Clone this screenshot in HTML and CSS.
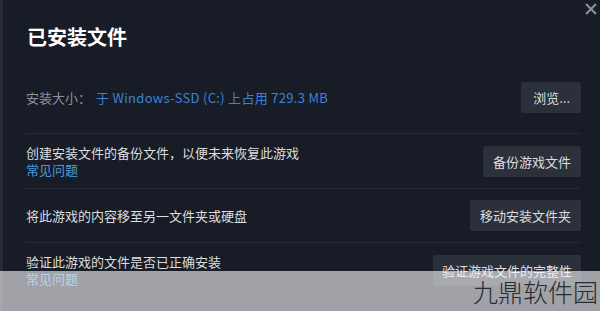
FILE: index.html
```html
<!DOCTYPE html>
<html lang="zh-CN">
<head>
<meta charset="utf-8">
<link rel="stylesheet" href="styles.css">
</head>
<body>
<div class="dialog">
  <div class="edge"></div>
  <div class="content">
    <h1 class="title">已安装文件</h1>
    <div class="row row-first">
      <div class="info">
        <span class="label">安装大小：</span><span class="size">于 Windows-SSD (C:) 上占用 729.3 MB</span>
      </div>
      <button class="btn btn-browse">浏览...</button>
    </div>
    <div class="row">
      <div class="info">
        <div class="desc">创建安装文件的备份文件，以便未来恢复此游戏</div>
        <div class="link">常见问题</div>
      </div>
      <button class="btn">备份游戏文件</button>
    </div>
    <div class="row">
      <div class="info">
        <div class="desc">将此游戏的内容移至另一文件夹或硬盘</div>
      </div>
      <button class="btn">移动安装文件夹</button>
    </div>
    <div class="row row-last">
      <div class="info">
        <div class="desc">验证此游戏的文件是否已正确安装</div>
        <div class="link">常见问题</div>
      </div>
      <button class="btn btn-verify">验证游戏文件的完整性</button>
    </div>
  </div>
  <svg class="close" width="12" height="12" viewBox="0 0 12 12"><path d="M1 1 L11 11 M11 1 L1 11" stroke="#8b929a" stroke-width="2" fill="none"/></svg>
  <div class="watermark"><span class="wm-text">九鼎软件园</span></div>
</div>
</body>
</html>
```
FILE: styles.css
```css
* { box-sizing: border-box; }
html, body { margin: 0; padding: 0; }
body {
  width: 600px;
  height: 311px;
  overflow: hidden;
  background: #181c26;
  font-family: "Noto Sans CJK SC", "Noto Sans", sans-serif;
  color: #dcdedf;
}
.dialog {
  position: relative;
  display: flex;
  width: 600px;
  height: 311px;
}
.edge {
  width: 3px;
  flex: none;
  background: #272b33;
}
.content {
  flex: 1;
  padding: 0 19px 0 23px;
}
.title {
  margin: 24px 0 0 1px;
  font-size: 20px;
  line-height: 26px;
  font-weight: 700;
  color: #ffffff;
}
.row {
  display: flex;
  align-items: center;
  justify-content: space-between;
  padding: 10px 0;
  border-bottom: 1px solid #262b35;
  min-height: 54px;
}
.row-first {
  padding: 32px 0 20px;
}
.row-last { border-bottom: none; }
.info {
  font-size: 13px;
  line-height: 17px;
}
.label { color: #8b929a; }
.size { color: #3a84d8; margin-left: 5px; letter-spacing: 0.3px; }
.desc { color: #dcdedf; }
.link { color: #4a9fdc; }
.btn {
  height: 31px;
  padding: 0 10px;
  border: none;
  border-radius: 2px;
  background: #2b303b;
  color: #dcdedf;
  font-family: "Noto Sans CJK SC", "Noto Sans", sans-serif;
  font-size: 13px;
}
.btn-browse { padding: 0 11px 0 12px; }
.btn-verify { padding: 0 9px; }
.close {
  position: absolute;
  top: 3px;
  left: 585px;
}
.watermark {
  position: absolute;
  left: 0;
  top: 271px;
  width: 600px;
  height: 40px;
  background: rgba(252, 252, 254, 0.6);
}
.wm-text {
  position: absolute;
  right: 2px;
  top: 2px;
  font-size: 25px;
  line-height: 36px;
  font-weight: 300;
  color: #2a2b2e;
}
```
